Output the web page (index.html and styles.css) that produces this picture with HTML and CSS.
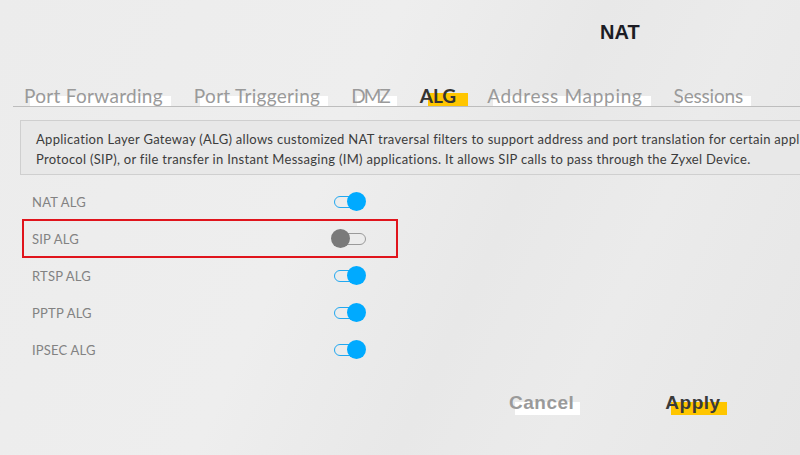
FILE: index.html
```html
<!DOCTYPE html>
<html>
<head>
<meta charset="utf-8">
<link rel="stylesheet" href="styles.css">
</head>
<body>
<div class="page">
  <h1 class="title">NAT</h1>
  <nav class="tabs">
    <span class="tab"><span class="mark"></span><span class="tab-text">Port Forwarding</span></span>
    <span class="tab"><span class="mark"></span><span class="tab-text">Port Triggering</span></span>
    <span class="tab tight"><span class="mark"></span><span class="tab-text">DMZ</span></span>
    <span class="tab active"><span class="mark"></span><span class="tab-text">ALG</span></span>
    <span class="tab wide"><span class="mark"></span><span class="tab-text">Address Mapping</span></span>
    <span class="tab narrow"><span class="mark"></span><span class="tab-text">Sessions</span></span>
  </nav>
  <div class="info">
    <p>Application Layer Gateway (ALG) allows customized NAT traversal filters to support address and port translation for certain applications such as Session Initiation</p>
    <p>Protocol (SIP), or file transfer in Instant Messaging (IM) applications. It allows SIP calls to pass through the Zyxel Device.</p>
  </div>
  <div class="rows">
    <div class="row"><span class="label">NAT ALG</span><span class="toggle on"><span class="knob"></span></span></div>
    <div class="row highlight"><span class="label">SIP ALG</span><span class="toggle off"><span class="knob"></span></span></div>
    <div class="row"><span class="label">RTSP ALG</span><span class="toggle on"><span class="knob"></span></span></div>
    <div class="row"><span class="label">PPTP ALG</span><span class="toggle on"><span class="knob"></span></span></div>
    <div class="row"><span class="label">IPSEC ALG</span><span class="toggle on"><span class="knob"></span></span></div>
  </div>
  <div class="actions">
    <span class="btn cancel"><span class="mark"></span><span class="btn-text">Cancel</span></span>
    <span class="btn apply"><span class="mark"></span><span class="btn-text">Apply</span></span>
  </div>
</div>
</body>
</html>
```
FILE: styles.css
```css
html, body {
  margin: 0;
  padding: 0;
}
body {
  width: 800px;
  height: 455px;
  overflow: hidden;
  background: linear-gradient(115deg, #ececec 0%, #eeeeee 40%, #e8e8e8 60%, #ebebeb 75%, #e6e6e6 100%);
  font-family: "Lato", "Liberation Sans", sans-serif;
}
.page {
  width: 800px;
  overflow: hidden;
  display: flex;
  flex-direction: column;
}
.title {
  margin: 19px 0 0 600px;
  font-family: "Liberation Sans", sans-serif;
  font-size: 20px;
  font-weight: bold;
  color: #1c1c24;
  line-height: 26px;
  height: 26px;
}
.tabs {
  margin: 33px 0 0 13px;
  padding: 4px 0 0 11px;
  width: 787px;
  display: flex;
  gap: 31px;
  border-bottom: 1px solid #bdbdbd;
  height: 29px;
  box-sizing: border-box;
}
.tab {
  position: relative;
  font-size: 19px;
  line-height: 28px;
  height: 24px;
  color: #9a9a9a;
  letter-spacing: 0.3px;
  white-space: nowrap;
}
.tab.tight {
  letter-spacing: -2px;
}
.tab.wide {
  letter-spacing: 0.7px;
}
.tab.narrow {
  letter-spacing: -0.2px;
}
.tab-text {
  position: relative;
}
.tab .mark {
  position: absolute;
  left: 6px;
  right: -8px;
  top: 14px;
  height: 10px;
  background: #ffffff;
}
.tab.active {
  color: #333333;
  font-weight: bold;
  letter-spacing: 0;
}
.tab.active .mark {
  background: #ffc600;
  left: 8px;
  right: -12px;
  top: 11px;
  height: 13px;
}
.info {
  margin: 13px 0 0 20px;
  width: 800px;
  height: 55px;
  flex-shrink: 0;
  box-sizing: border-box;
  border: 1px solid #cfcfcf;
  background: #e8e8e8;
  padding: 8px 0 0 15px;
  overflow: hidden;
}
.info p {
  margin: 0;
  font-size: 13px;
  line-height: 20px;
  color: #3c3c3c;
  white-space: nowrap;
  letter-spacing: 0.3px;
}
.rows {
  margin: 8px 0 0 22px;
  width: 376px;
  display: flex;
  flex-direction: column;
}
.row {
  height: 37px;
  display: flex;
  align-items: center;
  justify-content: space-between;
  padding: 0 30px 0 8px;
  box-sizing: border-box;
  border: 2px solid transparent;
}
.row.highlight {
  border-color: #e0141c;
  height: 39px;
  margin: -1px 0;
}
.label {
  font-size: 13px;
  color: #828282;
  letter-spacing: 0.2px;
}
.toggle {
  position: relative;
  width: 32px;
  height: 12px;
  box-sizing: border-box;
  border-radius: 6px;
  border: 1.5px solid #9a9a9a;
  background: #ececec;
}
.toggle.on {
  border-color: #22a8f0;
  width: 26px;
  margin-right: 6px;
}
.knob {
  position: absolute;
  top: 50%;
  width: 19px;
  height: 19px;
  margin-top: -9.5px;
  border-radius: 50%;
}
.toggle.on .knob {
  right: -7px;
  background: #00aaff;
}
.toggle.off .knob {
  left: -4px;
  background: #7a7a7a;
}
.actions {
  margin: 22px 0 0 509px;
  display: flex;
  gap: 91px;
}
.btn {
  position: relative;
  font-family: "Liberation Sans", sans-serif;
  font-weight: bold;
  font-size: 19px;
  line-height: 26px;
  letter-spacing: 0.5px;
}
.btn-text {
  position: relative;
}
.btn .mark {
  position: absolute;
  top: 12px;
  height: 13px;
  left: 6px;
  right: -6px;
}
.cancel {
  color: #9a9a9a;
}
.cancel .mark {
  background: #ffffff;
}
.apply {
  color: #3a3a3a;
}
.apply .mark {
  background: #ffc600;
}
```
